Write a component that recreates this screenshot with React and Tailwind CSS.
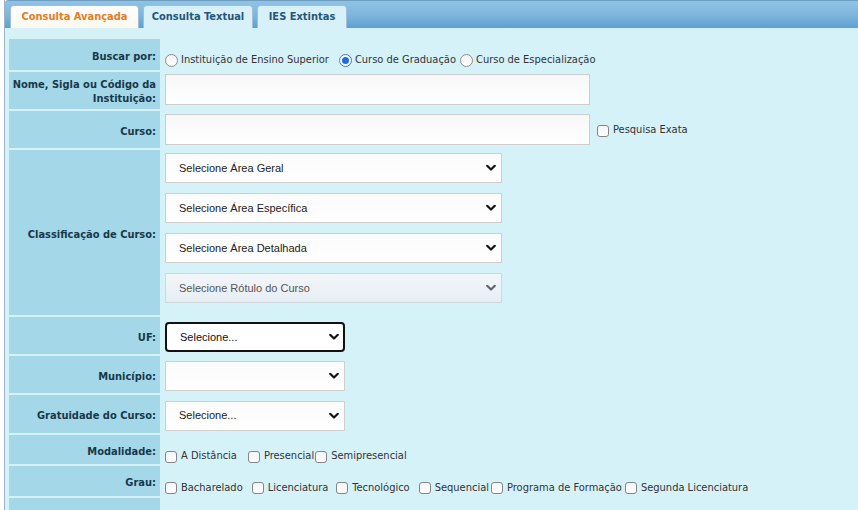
import React from "react";

const FONT = { fontFamily: '"DejaVu Sans Condensed", "DejaVu Sans", sans-serif' };

function Chevron({ muted }) {
  return (
    <svg
      className="pointer-events-none absolute right-[6px] top-1/2 -translate-y-1/2"
      width="10"
      height="7"
      viewBox="0 0 10 7"
    >
      <path
        d="M1.2 1.3 L5 5 L8.8 1.3"
        fill="none"
        stroke={muted ? "#5a6670" : "#111"}
        strokeWidth="2.2"
        strokeLinecap="round"
        strokeLinejoin="round"
      />
    </svg>
  );
}

function Select({ text, width, disabled, focused }) {
  return (
    <div className={`relative h-[30px] ${width}`}>
      <div
        className={`flex h-full items-center pl-[13px] text-[11px] ${
          focused
            ? "rounded-[4px] border-2 border-[#111] bg-white pl-[12px] text-[#111]"
            : disabled
            ? "border border-[#cfd6dc] bg-gradient-to-b from-[#f3f6f9] to-[#e6eef5] text-[#555]"
            : "border border-[#cfcfcf] bg-gradient-to-b from-[#fbfbfb] to-white text-[#222]"
        }`}
        style={{ fontFamily: '"Liberation Sans", Arial, sans-serif' }}
      >
        {text}
      </div>
      <Chevron muted={disabled} />
    </div>
  );
}

function Radio({ checked }) {
  return checked ? (
    <span className="mr-[3px] inline-flex h-[13px] w-[13px] shrink-0 items-center justify-center rounded-full border border-[#2f7fd0] bg-white">
      <span className="h-[7px] w-[7px] rounded-full bg-[#1a6fdc]" />
    </span>
  ) : (
    <span className="mr-[3px] inline-block h-[13px] w-[13px] shrink-0 rounded-full border border-[#8c8c8c] bg-gradient-to-b from-[#f2f2f2] to-white" />
  );
}

function Check() {
  return (
    <span className="mr-[4px] inline-block h-[12px] w-[12px] shrink-0 rounded-[3px] border border-[#858585] bg-gradient-to-b from-[#f4f4f4] to-white" />
  );
}

function Row({ label, h, children, top }) {
  return (
    <div className={`flex ${h}`}>
      <div
        className={`flex w-[151px] shrink-0 justify-end bg-[#a4d8e8] pr-[4px] text-right text-[11px] font-bold leading-[14px] text-[#18384a] ${
          top ? "items-start pt-[6px]" : "items-center pt-[4px]"
        }`}
      >
        {label}
      </div>
      <div className="flex flex-1 items-center pl-[5px] text-[11px] text-[#333]">{children}</div>
    </div>
  );
}

const modalidades = [
  { t: "A Distância", ml: "ml-0" },
  { t: "Presencial", ml: "ml-[11px]" },
  { t: "Semipresencial", ml: "ml-[1px]" },
];

const graus = [
  { t: "Bacharelado", ml: "ml-0" },
  { t: "Licenciatura", ml: "ml-[9px]" },
  { t: "Tecnológico", ml: "ml-[8px]" },
  { t: "Sequencial", ml: "ml-[9px]" },
  { t: "Programa de Formação", ml: "ml-[2px]" },
  { t: "Segunda Licenciatura", ml: "ml-[3px]" },
];

export default function App() {
  return (
    <div className="h-[510px] w-[858px] overflow-hidden bg-white" style={FONT}>
      <div className="ml-[4px] h-[600px] w-[900px] border-l border-[#9db4c4] bg-[#d6f2f9]">
        {/* tabs */}
        <div className="flex h-[28px] items-end gap-[4px] rounded-tl-[4px] border-t border-[#6e9dbd] bg-gradient-to-b from-[#90c2e4] via-[#80b6de] to-[#5f9fd1] pl-[5px] text-[11px] font-bold">
          <div className="flex h-[23px] w-[129px] items-center justify-center rounded-t-[4px] border border-b-0 border-[#9cc1d8] bg-gradient-to-b from-white to-[#fbf8f0] text-[#e27d23]">
            Consulta Avançada
          </div>
          <div className="flex h-[23px] w-[110px] items-center justify-center rounded-t-[4px] border border-b-0 border-[#9cc1d8] bg-[#d8f0f8] text-[#25567c]">
            Consulta Textual
          </div>
          <div className="flex h-[23px] w-[90px] items-center justify-center rounded-t-[4px] border border-b-0 border-[#9cc1d8] bg-[#d8f0f8] text-[#25567c]">
            IES Extintas
          </div>
        </div>

        {/* form */}
        <div className="flex flex-col gap-[2px] pl-[4px] pt-[11px]">
          <Row label="Buscar por:" h="h-[31px]">
            <div className="flex items-center pt-[12px]">
              <Radio />
              <span>Instituição de Ensino Superior</span>
              <span className="ml-[10px] flex items-center">
                <Radio checked />
                <span>Curso de Graduação</span>
              </span>
              <span className="ml-[4px] flex items-center">
                <Radio />
                <span>Curso de Especialização</span>
              </span>
            </div>
          </Row>

          <Row label={<span>Nome, Sigla ou Código da<br />Instituição:</span>} h="h-[37px]" top>
            <div className="mb-[3px] h-[31px] w-[425px] border border-[#cdcdcd] bg-gradient-to-b from-[#f7f7f7] to-white" />
          </Row>

          <Row label="Curso:" h="h-[37px]">
            <div className="mb-[1px] h-[31px] w-[425px] border border-[#cdcdcd] bg-gradient-to-b from-[#f7f7f7] to-white" />
            <span className="ml-[7px] flex items-center pt-[2px]">
              <Check />
              <span>Pesquisa Exata</span>
            </span>
          </Row>

          <Row label="Classificação de Curso:" h="h-[165px]">
            <div className="flex flex-col gap-[10px] pb-[9px]">
              <Select text="Selecione Área Geral" width="w-[337px]" />
              <Select text="Selecione Área Específica" width="w-[337px]" />
              <Select text="Selecione Área Detalhada" width="w-[337px]" />
              <Select text="Selecione Rótulo do Curso" width="w-[337px]" disabled />
            </div>
          </Row>

          <Row label="UF:" h="h-[37px]">
            <div className="pt-[3px]">
              <Select text="Selecione..." width="w-[180px]" focused />
            </div>
          </Row>

          <Row label="Município:" h="h-[37px]">
            <div className="pt-[3px]">
              <Select text="" width="w-[180px]" />
            </div>
          </Row>

          <Row label="Gratuidade do Curso:" h="h-[38px]">
            <div className="pt-[3px]">
              <Select text="Selecione..." width="w-[180px]" />
            </div>
          </Row>

          <Row label="Modalidade:" h="h-[29px]">
            <div className="flex items-center pt-[14px]">
              {modalidades.map((m) => (
                <span key={m.t} className={`flex items-center ${m.ml}`}>
                  <Check />
                  <span>{m.t}</span>
                </span>
              ))}
            </div>
          </Row>

          <Row label="Grau:" h="h-[30px]">
            <div className="flex items-center pt-[14px]">
              {graus.map((g) => (
                <span key={g.t} className={`flex items-center ${g.ml}`}>
                  <Check />
                  <span>{g.t}</span>
                </span>
              ))}
            </div>
          </Row>

          <Row label="" h="h-[30px]">
            <span />
          </Row>
        </div>
      </div>
    </div>
  );
}
